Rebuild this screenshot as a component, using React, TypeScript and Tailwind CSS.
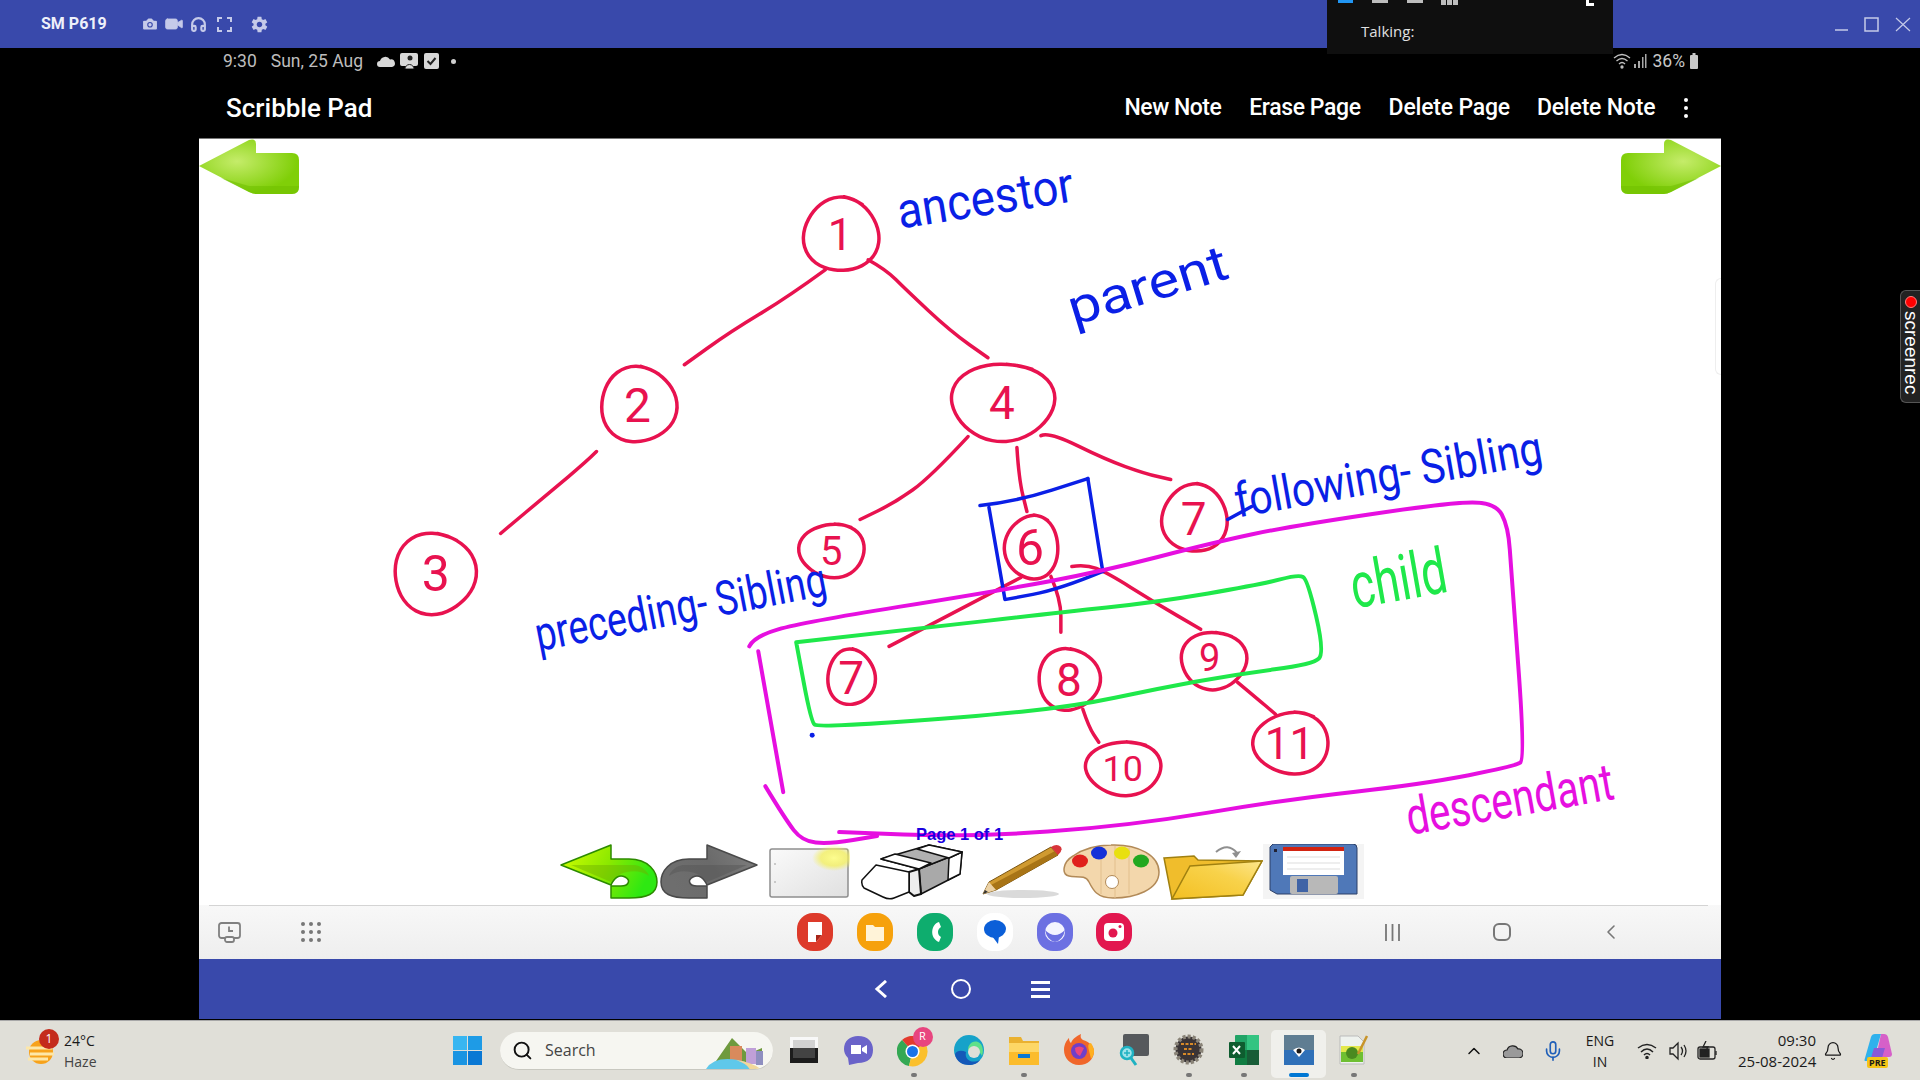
import { ChevronLeft, ChevronUp, Mic, Search, Bell, Video, Camera, Headphones } from 'lucide-react'
import { IoMdSettings } from 'react-icons/io'

type Pt = [number, number]

// ink strokes are stored as page coordinates, the sketch svg uses the same numbers in its viewBox
function smooth(pts: Pt[]) {
  let d = `M${pts[0][0]} ${pts[0][1]}`
  for (let i = 1; i < pts.length - 1; i++) {
    const mx = (pts[i][0] + pts[i + 1][0]) / 2
    const my = (pts[i][1] + pts[i + 1][1]) / 2
    d += `Q${pts[i][0]} ${pts[i][1]} ${mx} ${my}`
  }
  const last = pts[pts.length - 1]
  return d + `L${last[0]} ${last[1]}`
}

function loop(cx: number, cy: number, rx: number, ry: number, phase: number) {
  const pts: Pt[] = []
  for (let i = 0; i <= 26; i++) {
    const t = -1.5 + (i / 24) * Math.PI * 2
    const w = 1 + 0.035 * Math.sin(t * 3 + phase)
    pts.push([+(cx + Math.cos(t) * rx * w).toFixed(1), +(cy + Math.sin(t) * ry * w).toFixed(1)])
  }
  return smooth(pts)
}

const nodes = [
  { n: '1', x: 841, y: 235, rx: 38, ry: 37, tx: 840, ty: 250, size: 44 },
  { n: '2', x: 638, y: 405, rx: 38, ry: 38, tx: 637, ty: 422, size: 48 },
  { n: '3', x: 434, y: 574, rx: 41, ry: 41, tx: 435, ty: 592, size: 50 },
  { n: '4', x: 1003, y: 402, rx: 52, ry: 39, tx: 1002, ty: 419, size: 46 },
  { n: '5', x: 832, y: 551, rx: 33, ry: 27, tx: 831, ty: 566, size: 40 },
  { n: '6', x: 1032, y: 548, rx: 27, ry: 32, tx: 1030, ty: 566, size: 50 },
  { n: '7', x: 1195, y: 519, rx: 33, ry: 34, tx: 1194, ty: 536, size: 46 },
  { n: '7', x: 851, y: 678, rx: 24, ry: 28, tx: 851, ty: 695, size: 46 },
  { n: '8', x: 1069, y: 680, rx: 31, ry: 31, tx: 1069, ty: 697, size: 46 },
  { n: '9', x: 1214, y: 661, rx: 33, ry: 29, tx: 1210, ty: 672, size: 38 },
  { n: '10', x: 1124, y: 769, rx: 38, ry: 27, tx: 1123, ty: 782, size: 36 },
  { n: '11', x: 1292, y: 744, rx: 38, ry: 31, tx: 1290, ty: 760, size: 44 },
]

const pinkLines: Pt[][] = [
  [[825, 270], [788, 297], [730, 332], [684, 365]],
  [[868, 260], [886, 270], [906, 290], [951, 332], [988, 358]],
  [[596, 452], [586, 462], [550, 492], [500, 534]],
  [[968, 437], [930, 478], [895, 503], [860, 520]],
  [[1017, 448], [1019, 480], [1027, 512]],
  [[1041, 436], [1049, 432], [1106, 460], [1145, 474], [1171, 480]],
  [[1021, 578], [960, 610], [889, 647]],
  [[1051, 577], [1061, 600], [1061, 633]],
  [[1072, 567], [1086, 565], [1107, 573], [1155, 603], [1201, 630]],
  [[1083, 710], [1089, 728], [1099, 743]],
  [[1238, 683], [1256, 698], [1276, 715]],
]

const magentaLines: Pt[][] = [
  [[749, 647], [754, 637], [802, 623], [995, 592], [1102, 572], [1214, 543], [1289, 527], [1450, 503], [1496, 503], [1509, 527], [1512, 573], [1526, 760], [1516, 767], [1423, 785], [1289, 800], [1128, 827], [968, 838], [839, 833]],
  [[758, 652], [770, 720], [783, 793]],
  [[765, 787], [785, 820], [802, 842], [829, 845], [877, 837]],
]

const greenLine: Pt[] = [[796, 643], [914, 630], [1059, 613], [1155, 603], [1262, 585], [1299, 575], [1308, 580], [1325, 653], [1314, 665], [1236, 675], [1155, 690], [1075, 707], [968, 718], [818, 728], [811, 723], [796, 643]]

const blueLines: Pt[][] = [
  [[980, 506], [1016, 502], [1088, 479]],
  [[1088, 479], [1096, 530], [1103, 572]],
  [[1103, 572], [1060, 590], [1006, 600]],
  [[989, 508], [1005, 600]],
]

// labels on the page, size picked so the glyphs fill the same run as the writing
const labels = [
  { t: 'ancestor', x: 900, y: 229, w: 178, size: 50, a: -9, c: '#0a1fe6' },
  { t: 'parent', x: 1074, y: 326, w: 165, size: 50, a: -17, c: '#0a1fe6' },
  { t: 'following- Sibling', x: 1238, y: 518, w: 312, size: 48, a: -10, c: '#0a1fe6' },
  { t: 'preceding- Sibling', x: 538, y: 652, w: 296, size: 48, a: -11, c: '#0a1fe6' },
  { t: 'child', x: 1355, y: 609, w: 97, size: 64, a: -10, c: '#1fe84a' },
  { t: 'descendant', x: 1410, y: 836, w: 210, size: 52, a: -10, c: '#e60fe0' },
]

function Sketch() {
  return (
    <svg viewBox="199 139 1522 767" className="absolute inset-0 w-full h-full" fill="none" strokeLinecap="round" strokeLinejoin="round">
      <g stroke="#e8124f" strokeWidth="3.5">
        {pinkLines.map((l, i) => <path key={i} d={smooth(l)} />)}
        {nodes.map((c, i) => <path key={i} d={loop(c.x, c.y, c.rx, c.ry, i)} />)}
      </g>
      <g className="font-['Roboto',sans-serif] font-normal">
        {nodes.map((c, i) => (
          <text key={i} x={c.tx} y={c.ty} fontSize={c.size} fill="#e8124f" textAnchor="middle">{c.n}</text>
        ))}
        {labels.map((l) => (
          <text
            key={l.t}
            x={l.x}
            y={l.y}
            fontSize={l.size}
            fill={l.c}
            textLength={l.w}
            lengthAdjust="spacingAndGlyphs"
            transform={`rotate(${l.a} ${l.x} ${l.y})`}
          >
            {l.t}
          </text>
        ))}
      </g>
      <g stroke="#0a1fe6" strokeWidth="3.5">
        {blueLines.map((l, i) => <path key={i} d={smooth(l)} />)}
        <path d="M1228 520 L1252 507" />
      </g>
      <circle cx="812" cy="736" r="2.5" fill="#0a1fe6" />
      <path d={smooth(greenLine)} stroke="#1fe84a" strokeWidth="4" />
      <g stroke="#e60fe0" strokeWidth="4">
        {magentaLines.map((l, i) => <path key={i} d={smooth(l)} />)}
      </g>
    </svg>
  )
}

function PageArrow({ flip }: { flip?: boolean }) {
  const id = flip ? 'pa2' : 'pa1'
  return (
    <svg width="100" height="56" viewBox="0 0 100 56" className={flip ? 'absolute top-0 right-0 -scale-x-100' : 'absolute top-0 left-0'}>
      <defs>
        <radialGradient id={id} cx="0.38" cy="0.4" r="0.6">
          <stop offset="0" stopColor="#c5ec6a" />
          <stop offset="1" stopColor="#80cf08" />
        </radialGradient>
      </defs>
      <path d="M0 27 L50 1 Q57 -1 57 5 V14 H93 Q100 14 100 21 V48 Q100 55 93 55 H58 L57 55 Q54 55 50 53 Z" fill={`url(#${id})`} />
      <path d="M22 39 L50 53 Q54 55 58 55 H93 Q100 55 100 48 V47 H50 Z" fill="#6fc000" opacity="0.55" />
    </svg>
  )
}

function UndoArrow({ gray }: { gray?: boolean }) {
  const id = gray ? 'ua2' : 'ua1'
  return (
    <svg width="100" height="55" viewBox="0 0 100 55" className={gray ? '-scale-x-100' : ''}>
      <defs>
        <linearGradient id={id} x1="0" x2="1" y1="0" y2="0.3">
          <stop offset="0" stopColor={gray ? '#808080' : '#d4ff00'} />
          <stop offset="0.55" stopColor={gray ? '#6a6a6a' : '#8be800'} />
          <stop offset="1" stopColor={gray ? '#6e6e6e' : '#2ee812'} />
        </linearGradient>
      </defs>
      <path d="M2 21 L52 1 V15 H70 C90 15 98 28 98 38 C98 50 88 54 70 54 H52 V42 H62 C70 42 72 36 66 33 C60 30 55 34 52 41 Z" fill={`url(#${id})`} stroke={gray ? '#4a4a4a' : '#2c8a00'} strokeWidth="1.5" strokeLinejoin="round" />
      <path d="M12 21 L52 21 H76 C82 22 88 26 90 32 C80 24 60 26 52 38 Z" fill={gray ? '#555' : '#6fb000'} opacity="0.45" />
    </svg>
  )
}

function NotePage() {
  return (
    <svg width="82" height="55" viewBox="0 0 82 55">
      <defs>
        <linearGradient id="np" x1="0" x2="1" y1="0" y2="1">
          <stop offset="0" stopColor="#fafafa" />
          <stop offset="1" stopColor="#e0e0e0" />
        </linearGradient>
        <radialGradient id="gl">
          <stop offset="0" stopColor="#fdfd90" />
          <stop offset="0.6" stopColor="#f4f05a" stopOpacity="0.75" />
          <stop offset="1" stopColor="#f4f05a" stopOpacity="0" />
        </radialGradient>
      </defs>
      <rect x="2" y="5" width="78" height="48" rx="2" fill="url(#np)" stroke="#8e8e8e" strokeWidth="1.5" />
      <ellipse cx="66" cy="14" rx="22" ry="13" fill="url(#gl)" />
      <circle cx="7" cy="20" r="1" fill="#bbb" />
      <circle cx="7" cy="38" r="1" fill="#bbb" />
    </svg>
  )
}

function Eraser() {
  return (
    <svg width="102" height="56" viewBox="0 0 102 56" strokeLinejoin="round" stroke="#111" strokeWidth="1.5">
      <path d="M58 25 L101 8 L99 30 L60 50 Z" fill="#a9a9a9" />
      <path d="M88 14 L101 8 L99 30 L87 36 Z" fill="#fff" />
      <path d="M20 15 L68 1 L101 8 L58 25 Z" fill="#b0b0b0" />
      <path d="M68 1 L101 8 L88 14 L56 5 Z" fill="#fff" />
      <path d="M20 15 L34 10 L70 19 L58 25 Z" fill="#fff" />
      <path d="M48 28 L58 25 L60 50 L53 52 L48 48 Z" fill="#ededed" strokeWidth="2" />
      <path d="M1 36 L15 21 L48 28 L48 48 L33 54 Q28 56 22 53 L3 44 Q0 41 1 36 Z" fill="#fff" />
    </svg>
  )
}

function Pencil() {
  return (
    <svg width="82" height="55" viewBox="0 0 82 55">
      <ellipse cx="42" cy="50" rx="36" ry="4" fill="#bbb" opacity="0.55" />
      <path d="M2 50 L8 38 L70 3 L77 11 L15 46 Z" fill="#d09a30" stroke="#7a5410" strokeWidth="1" />
      <path d="M10 41 L74 7 L77 11 L15 46 Z" fill="#a87416" />
      <path d="M2 50 L8 38 L15 46 Z" fill="#ecd2a6" />
      <path d="M2 50 L4 46 L7 48 Z" fill="#333" />
      <path d="M70 3 Q76 -1 80 3 Q82 7 77 11 Z" fill="#d8343a" />
    </svg>
  )
}

function Palette() {
  return (
    <svg width="97" height="55" viewBox="0 0 97 55">
      <path d="M48 1 C76 0 96 12 96 28 C96 46 72 54 50 54 C34 54 30 46 26 38 C22 30 12 34 6 32 C-2 30 0 18 10 12 C20 5 34 1 48 1 Z" fill="#f3d7ac" stroke="#b28a58" strokeWidth="1.5" />
      <g stroke="#e2bf8c" strokeWidth="1">
        <path d="M38 3 V50" />
        <path d="M52 2 V54" />
        <path d="M66 4 V50" />
      </g>
      <circle cx="49" cy="38" r="6.5" fill="#fff" stroke="#b28a58" />
      <ellipse cx="17" cy="17" rx="8" ry="6.5" fill="#e0201c" />
      <ellipse cx="36" cy="9" rx="8" ry="6.5" fill="#1530d8" />
      <ellipse cx="59" cy="9" rx="8" ry="6.5" fill="#e8e010" />
      <ellipse cx="78" cy="17" rx="8" ry="6.5" fill="#22a820" />
    </svg>
  )
}

function Folder() {
  return (
    <svg width="101" height="56" viewBox="0 0 101 56">
      <defs>
        <linearGradient id="fd" x1="0" x2="1" y1="1" y2="0">
          <stop offset="0" stopColor="#f3bf22" />
          <stop offset="0.6" stopColor="#f8d24a" />
          <stop offset="1" stopColor="#fde68c" />
        </linearGradient>
      </defs>
      <path d="M2 14 L32 12 L36 16 L100 17 L81 51 L10 55 Z" fill="#f0bd2c" stroke="#a08010" strokeWidth="1.5" />
      <path d="M28 22 L100 17 L81 51 L10 55 Z" fill="url(#fd)" stroke="#a08010" strokeWidth="1.5" />
      <path d="M54 8 Q66 -2 75 9" fill="none" stroke="#8f8f8f" strokeWidth="2" />
      <path d="M70 9 L79 7 L74 14 Z" fill="#8f8f8f" />
    </svg>
  )
}

function Floppy() {
  return (
    <svg width="101" height="55" viewBox="0 0 101 55" className="bg-[#f4f4f4]">
      <path d="M10 0 H90 Q94 0 94 4 V50 H14 L7 46 V3 Z" fill="#4f78b8" stroke="#2c3f66" strokeWidth="1" />
      <rect x="20" y="3" width="61" height="28" fill="#fff" />
      <rect x="20" y="3" width="61" height="4" fill="#d22412" />
      <path d="M24 13 H77 M24 19 H77 M24 25 H77" stroke="#ddd" />
      <rect x="27" y="32" width="48" height="18" rx="2" fill="#b8b8b8" />
      <rect x="34" y="35" width="11" height="13" fill="#3f63a6" />
      <rect x="11" y="5" width="3" height="3" fill="#223" />
    </svg>
  )
}

function AppIcon({ bg, children }: { bg: string; children: React.ReactNode }) {
  return (
    <div className={`w-[36px] h-[38px] rounded-[16px] flex items-center justify-center ${bg}`}>
      {children}
    </div>
  )
}

function TopBar() {
  return (
    <div className="h-[48px] bg-[#3949ab] flex items-center pl-[41px] text-[#c5cae9] shrink-0">
      <span className="text-[16px] font-bold text-[#eef0fa] font-['Roboto',sans-serif] w-[100px]">SM P619</span>
      <Camera size={18} fill="currentColor" stroke="#3949ab" strokeWidth={1.5} />
      <Video size={20} fill="currentColor" strokeWidth={1} className="ml-[5px]" />
      <Headphones size={17} strokeWidth={3} className="ml-[6px]" />
      <svg width="15" height="15" viewBox="0 0 15 15" fill="none" stroke="currentColor" strokeWidth="2" className="ml-[10px]">
        <path d="M1 5V1H5M10 1H14V5M14 10V14H10M5 14H1V10" />
      </svg>
      <IoMdSettings size={19} className="ml-[18px]" />
      <div className="ml-auto flex items-center gap-[16px] pr-[9px]">
        <svg width="13" height="15" viewBox="0 0 13 15" stroke="currentColor" strokeWidth="1.5"><path d="M0 13H13" /></svg>
        <svg width="15" height="15" viewBox="0 0 15 15" fill="none" stroke="currentColor" strokeWidth="1.5"><rect x="1" y="1" width="13" height="13" /></svg>
        <svg width="16" height="15" viewBox="0 0 16 15" stroke="currentColor" strokeWidth="1.2"><path d="M1 1L15 14M15 1L1 14" /></svg>
      </div>
    </div>
  )
}

function StatusBar() {
  return (
    <div className="h-[44px] flex items-center pb-[18px] pl-[24px] pr-[23px] text-[17.5px] text-[#bdbdbd] font-['Roboto',sans-serif]">
      <span>9:30</span>
      <span className="ml-[14px]">Sun, 25 Aug</span>
      <svg width="18" height="11" viewBox="0 0 18 11" fill="#d8d8d8" className="ml-[14px]"><path d="M3 11A3 3 0 0 1 3 5 5.5 5.5 0 0 1 13 3.500 3.800 3.800 0 0 1 15 11Z" /></svg>
      <svg width="18" height="16" viewBox="0 0 18 16" fill="#d8d8d8" className="ml-[5px]"><rect width="18" height="13" rx="2" /><circle cx="10" cy="5" r="2.500" fill="#222" /><path d="M5 16a4 4 0 0 1 9 0Z" fill="#d8d8d8" stroke="#222" /></svg>
      <svg width="15" height="16" viewBox="0 0 15 16" className="ml-[6px]"><rect width="15" height="16" rx="2" fill="#d8d8d8" /><path d="M3.500 8L6.500 11L11.500 5" stroke="#222" strokeWidth="2" fill="none" /></svg>
      <span className="w-[5px] h-[5px] rounded-full bg-[#d0d0d0] ml-[12px]" />
      <div className="ml-auto flex items-center">
        <svg width="18" height="16" viewBox="0 0 18 16" fill="none" stroke="#c0c0c0" strokeWidth="1.300"><path d="M1 5Q9 -2 17 5M3.500 8Q9 3 14.500 8M6 11Q9 8 12 11" /><circle cx="9" cy="14" r="1" fill="#c0c0c0" /></svg>
        <svg width="13" height="14" viewBox="0 0 13 14" fill="#a8a8a8" className="ml-[3px]"><rect x="0" y="10" width="2" height="4" /><rect x="4" y="7" width="2" height="7" /><rect x="8" y="3" width="1.500" height="11" /><rect x="11" y="0" width="1.500" height="14" /></svg>
        <span className="ml-[6px] text-[#c8c8c8]">36%</span>
        <svg width="8" height="16" viewBox="0 0 8 16" fill="#c8c8c8" className="ml-[5px]"><rect x="2.500" width="3" height="2" /><rect y="2" width="8" height="14" rx="1" /></svg>
      </div>
    </div>
  )
}

function AppBar() {
  return (
    <div className="h-[47px] flex items-center pb-[14px] pl-[27px] font-['Roboto',sans-serif] font-medium text-white border-b border-[#777]">
      <span className="text-[26px]">Scribble Pad</span>
      <span className="text-[23px] ml-[752px] tracking-[-0.5px]">New Note</span>
      <span className="text-[23px] ml-[28px] tracking-[-0.4px]">Erase Page</span>
      <span className="text-[23px] ml-[28px] tracking-[-0.2px]">Delete Page</span>
      <span className="text-[23px] ml-[27px] tracking-[-0.2px]">Delete Note</span>
      <div className="flex flex-col gap-[4px] ml-[29px]">
        <span className="w-[4px] h-[4px] rounded-full bg-white" />
        <span className="w-[4px] h-[4px] rounded-full bg-white" />
        <span className="w-[4px] h-[4px] rounded-full bg-white" />
      </div>
    </div>
  )
}

function DrawArea() {
  return (
    <div className="h-[766px] relative bg-white">
      <Sketch />
      <PageArrow />
      <PageArrow flip />
      <div className="absolute top-[139px] right-0 w-[6px] h-[97px] rounded-l-[6px] border border-r-0 border-[#eee]" />
      <span className="absolute left-[717px] top-[683px] text-[16.5px] font-bold text-[#1a00e0] font-['Liberation_Sans',sans-serif]">Page 1 of 1</span>
      <div className="absolute left-[360px] top-[705px] flex items-start">
        <UndoArrow />
        <div className="ml-[0px]"><UndoArrow gray /></div>
        <div className="ml-[9px]"><NotePage /></div>
        <div className="ml-[11px]"><Eraser /></div>
        <div className="ml-[18px]"><Pencil /></div>
        <Palette />
        <div className="ml-[2px]"><Folder /></div>
        <Floppy />
      </div>
    </div>
  )
}

function NavBar() {
  return (
    <div className="h-[54px] relative flex items-center pl-[19px] bg-gradient-to-b from-[#f8f8f8] to-[#eeeeee]">
      <div className="absolute top-0 left-[10px] right-[13px] h-px bg-[#d4d4d4]" />
      <svg width="23" height="21" viewBox="0 0 23 21" fill="none" stroke="#808080" strokeWidth="1.800">
        <rect x="1" y="1" width="21" height="15" rx="2.500" />
        <path d="M11 4.500V9H15" />
        <rect x="7" y="15" width="9" height="5" rx="2" fill="#f5f5f5" />
      </svg>
      <div className="grid grid-cols-3 gap-x-[4px] gap-y-[4px] ml-[60px]">
        {Array.from({ length: 9 }).map((_, i) => (
          <span key={i} className="w-[4px] h-[4px] rounded-full bg-[#777]" />
        ))}
      </div>
      <div className="flex items-center gap-[24px] ml-[476px]">
        <AppIcon bg="bg-[#dd3a2a]">
          <svg width="20" height="22" viewBox="0 0 20 22"><path d="M3 1H17V14L11 21H3Z" fill="#fff" /><path d="M11 21V14H17Z" fill="#a82418" /></svg>
        </AppIcon>
        <AppIcon bg="bg-[#f6a10c]">
          <svg width="20" height="20" viewBox="0 0 20 20"><path d="M1 3H8L10 5H19V19H1Z" fill="#fff3d8" /></svg>
        </AppIcon>
        <AppIcon bg="bg-[#0ead6e]">
          <svg width="20" height="24" viewBox="0 0 20 24"><path d="M14 2C6 4 4 18 14 22L16 17C12 15 12 9 16 7Z" fill="#fff" /></svg>
        </AppIcon>
        <AppIcon bg="bg-white">
          <svg width="24" height="28" viewBox="0 0 24 28"><ellipse cx="12" cy="11" rx="11" ry="9" fill="#0b5fd8" /><path d="M9 18L15 26L16 18Z" fill="#0b5fd8" /></svg>
        </AppIcon>
        <AppIcon bg="bg-[#6c70e2]">
          <svg width="28" height="28" viewBox="0 0 28 28" fill="none"><circle cx="14" cy="14" r="10" fill="#f4f4ff" /><path d="M4 12Q14 22 24 12Q22 22 14 24Q6 22 4 12Z" fill="#6c70e2" /></svg>
        </AppIcon>
        <div className="ml-[-1px]">
          <AppIcon bg="bg-[#e2174f]">
            <svg width="22" height="20" viewBox="0 0 22 20"><rect x="1" y="1" width="20" height="18" rx="4" fill="#fff" /><circle cx="10" cy="11" r="4.500" fill="#e2174f" /><circle cx="17" cy="4.500" r="1.500" fill="#e2174f" /></svg>
          </AppIcon>
        </div>
      </div>
      <svg width="17" height="17" viewBox="0 0 17 17" stroke="#777" strokeWidth="1.800" className="ml-[252px]"><path d="M2 0V17M8.500 0V17M15 0V17" /></svg>
      <div className="w-[18px] h-[18px] rounded-[6px] border-[2px] border-[#777] ml-[92px]" />
      <ChevronLeft size={24} color="#777" strokeWidth={1.600} className="ml-[88px]" />
    </div>
  )
}

function BlueNav() {
  return (
    <div className="h-[60px] bg-[#3949ab] flex items-center pl-[675px]">
      <svg width="14" height="18" viewBox="0 0 14 18" fill="none" stroke="#fff" strokeWidth="3"><path d="M12 1L3 9L12 17" /></svg>
      <div className="w-[20px] h-[20px] rounded-full border-[2px] border-white ml-[63px]" />
      <div className="flex flex-col gap-[4px] ml-[60px]">
        <span className="w-[19px] h-[3px] bg-white" />
        <span className="w-[19px] h-[3px] bg-white" />
        <span className="w-[19px] h-[3px] bg-white" />
      </div>
    </div>
  )
}

function TaskIcon({ children, dot, active }: { children: React.ReactNode; dot?: boolean; active?: boolean }) {
  return (
    <div className={`w-[55px] h-[48px] mt-[6px] relative flex items-center justify-center rounded-[5px] ${active ? 'bg-[#f0f0ec]' : ''}`}>
      <div className="mt-[-8px] flex">{children}</div>
      {dot && <span className="absolute bottom-[1px] w-[6px] h-[4px] rounded-[2px] bg-[#777]" />}
      {active && <span className="absolute bottom-[1px] w-[20px] h-[4px] rounded-[2px] bg-[#0078d4]" />}
    </div>
  )
}

function Taskbar() {
  return (
    <div className="h-[60px] shrink-0 flex items-center bg-[#e0dfd8] border-t border-[#a8a8a8] font-['Open_Sans',sans-serif] text-[#1a1a1a] relative">
      {/* weather */}
      <div className="w-[453px] pl-[26px] flex items-center">
        <div className="relative w-[38px] h-[30px]">
          <svg width="28" height="28" viewBox="0 0 28 28" className="absolute top-[2px] left-0">
            <circle cx="15" cy="14" r="12" fill="#f7a21b" />
            <path d="M0 10H26M4 16H28M2 21H22" stroke="#fde7a8" strokeWidth="3" />
          </svg>
          <span className="absolute top-[-7px] left-[13px] w-[20px] h-[20px] rounded-full bg-[#c42b1c] text-white text-[12px] flex items-center justify-center">1</span>
        </div>
        <div className="leading-[21px] text-[14px]">
          <div>24°C</div>
          <div className="text-[#444]">Haze</div>
        </div>
      </div>
      {/* start */}
      <svg width="29" height="29" viewBox="0 0 29 29">
        <rect width="14" height="14" fill="#38b6f1" />
        <rect x="15" width="14" height="14" fill="#1e9be6" />
        <rect y="15" width="14" height="14" fill="#1a94e2" />
        <rect x="15" y="15" width="14" height="14" fill="#0a78d4" />
      </svg>
      <div className="w-[273px] h-[38px] ml-[18px] rounded-full bg-[#f6f6f1] border-b border-[#c8c8c0] flex items-center pl-[12px] relative overflow-hidden">
        <Search size={21} color="#111" strokeWidth={2.200} />
        <span className="ml-[12px] text-[16px] text-[#444]">Search</span>
        <svg width="62" height="34" viewBox="0 0 62 34" className="absolute right-[5px] top-[4px]">
          <path d="M26 2L42 18L56 12V28H8Z" fill="#6f9a3e" />
          <rect x="24" y="10" width="12" height="18" fill="#d98a5c" />
          <rect x="40" y="12" width="10" height="16" fill="#c0a0d8" />
          <rect x="50" y="15" width="7" height="14" fill="#8f8fc0" />
          <path d="M0 33Q8 20 32 24Q46 27 52 34Z" fill="#5fc8ea" />
          <path d="M30 24Q46 26 56 34H44Q42 28 30 24Z" fill="#f2d79a" />
        </svg>
      </div>
      {/* pinned apps */}
      <div className="flex items-center ml-[3px] h-full">
        <TaskIcon>
          <svg width="28" height="26" viewBox="0 0 28 26"><rect width="28" height="12" fill="#f8f8f8" /><rect y="11" width="28" height="15" fill="#1c1c1c" /><rect x="3" y="3" width="22" height="18" fill="#8c8c8c" opacity="0.35" /></svg>
        </TaskIcon>
        <TaskIcon>
          <svg width="29" height="30" viewBox="0 0 29 30"><path d="M14 1C24 1 29 7 29 15C29 23 24 28 14 28L5 30L4 23C1 20 0 17 0 14C0 6 6 1 14 1Z" fill="#6a63c9" /><path d="M7 10H17V19H7ZM18 13L23 10V19L18 16Z" fill="#fff" /></svg>
        </TaskIcon>
        <TaskIcon dot>
          <div className="relative w-[34px] h-[32px]">
            <svg width="31" height="31" viewBox="0 0 31 31" className="absolute left-0 top-[2px]">
              <path d="M15.500 15.500L5 4A15 15 0 0 1 28 7Z" fill="#e33b2e" />
              <path d="M15.500 15.500L5 4A15 15 0 0 0 12 30Z" fill="#34a853" />
              <path d="M15.500 15.500L28 7A15 15 0 0 1 12 30Z" fill="#fbc02d" />
              <circle cx="15.500" cy="15.500" r="7" fill="#fff" />
              <circle cx="15.500" cy="15.500" r="5.500" fill="#1a73e8" />
            </svg>
            <span className="absolute right-[-2px] top-[-7px] w-[20px] h-[20px] rounded-full bg-[#e8457f] text-white text-[11px] flex items-center justify-center">R</span>
          </div>
        </TaskIcon>
        <TaskIcon>
          <svg width="30" height="30" viewBox="0 0 30 30"><circle cx="15" cy="15" r="15" fill="#16a2c9" /><path d="M1 19C2 27 9 30 15 30C20 30 24 28 26 25C18 29 10 25 12 17C8 15 3 15 1 19Z" fill="#1458b8" /><path d="M14 15C20 14 26 16 28 21C30 16 29 9 24 7C18 5 14 10 14 15Z" fill="#5fe08a" /><circle cx="20" cy="17" r="6" fill="#e0dfd8" /></svg>
        </TaskIcon>
        <TaskIcon dot>
          <svg width="30" height="30" viewBox="0 0 30 30"><path d="M0 2H12L14 6H30V30H0Z" fill="#eab130" /><rect y="8" width="30" height="22" fill="#fdd766" /><rect y="17" width="30" height="13" fill="#fbbc2c" /><rect x="9" y="19" width="12" height="4" fill="#0a78d4" /></svg>
        </TaskIcon>
        <TaskIcon>
          <svg width="30" height="31" viewBox="0 0 30 31"><path d="M15 31C6 31 0 24 0 16C0 10 3 6 5 4C5 7 6 8 7 9C9 4 13 2 17 0C16 3 17 5 19 6C25 8 30 12 30 17C30 25 24 31 15 31Z" fill="#f0662a" /><path d="M27 9C29 12 30 15 30 17C30 20 29 23 27 25C25 15 22 10 27 9Z" fill="#ffb020" /><circle cx="15" cy="17" r="8" fill="#6f3fc8" /><path d="M11 14Q15 11 20 14L16 22Q11 20 11 14Z" fill="#e8457f" /></svg>
        </TaskIcon>
        <TaskIcon>
          <svg width="30" height="32" viewBox="0 0 30 32"><rect x="4" width="26" height="22" rx="2" fill="#56595c" /><circle cx="8" cy="19" r="6" fill="#9fe3ea" stroke="#1fb2c2" strokeWidth="2.500" /><path d="M8 16V22M5 19H11" stroke="#1fb2c2" strokeWidth="1.500" /><path d="M12 24L17 31" stroke="#1fb2c2" strokeWidth="3" /></svg>
        </TaskIcon>
        <TaskIcon dot>
          <svg width="31" height="31" viewBox="0 0 31 31"><circle cx="15.500" cy="15.500" r="13" fill="#3a3436" stroke="#8a8478" strokeWidth="4" strokeDasharray="3 2" /><path d="M8 10H23M11 15H20M10 20H21" stroke="#d88a28" strokeWidth="2" strokeDasharray="3 1.500" /></svg>
        </TaskIcon>
        <TaskIcon dot>
          <svg width="30" height="30" viewBox="0 0 30 30"><rect x="6" width="24" height="30" rx="1" fill="#21a366" /><rect x="18" width="12" height="15" fill="#33c481" /><rect x="6" y="15" width="12" height="15" fill="#107c41" /><rect x="18" y="15" width="12" height="15" fill="#185c37" /><rect y="7" width="16" height="16" rx="1" fill="#0e5c2f" /><path d="M4 11L11 19M11 11L4 19" stroke="#fff" strokeWidth="2" /></svg>
        </TaskIcon>
        <TaskIcon active>
          <svg width="30" height="30" viewBox="0 0 30 30"><rect width="30" height="16" fill="#5f7d92" /><rect y="15" width="30" height="15" fill="#2f70b8" /><path d="M9 15Q15 10 21 15L15 22Z" fill="#fff" /><circle cx="15" cy="16" r="2.500" fill="#1a1a1a" /></svg>
        </TaskIcon>
        <TaskIcon dot>
          <svg width="30" height="32" viewBox="0 0 30 32"><path d="M1 2H19L25 8V30H1Z" fill="#eef2ee" stroke="#bbb" /><rect x="2" y="12" width="22" height="16" fill="#6fbf32" /><rect x="2" y="12" width="22" height="6" fill="#e3e84a" /><circle cx="13" cy="19" r="6" fill="#4a8a20" /><path d="M19 20L28 2" stroke="#c8942a" strokeWidth="2.500" /></svg>
        </TaskIcon>
      </div>
      {/* tray */}
      <ChevronUp size={20} strokeWidth={1.800} className="ml-[83px] text-[#111]" />
      <svg width="20" height="14" viewBox="0 0 20 14" className="ml-[19px]"><path d="M4 14A4 4 0 0 1 4 6 6 6 0 0 1 15 5 4.500 4.500 0 0 1 16 14Z" fill="#9a9a9a" stroke="#222" strokeWidth="1.200" /></svg>
      <Mic size={22} color="#1f5fb8" strokeWidth={1.800} className="ml-[19px]" />
      <div className="w-[30px] ml-[21px] text-center text-[14px] leading-[21px]">
        <div>ENG</div>
        <div>IN</div>
      </div>
      <svg width="20" height="16" viewBox="0 0 20 16" fill="none" stroke="#222" strokeWidth="1.500" className="ml-[22px]"><path d="M1 5Q10 -2 19 5M4 9Q10 3 16 9M7 12Q10 9 13 12" /><circle cx="10" cy="14.500" r="1" fill="#222" /></svg>
      <svg width="20" height="20" viewBox="0 0 20 20" fill="none" stroke="#222" strokeWidth="1.300" className="ml-[12px]"><path d="M1 7H4L9 2V18L4 13H1Z" /><path d="M12 6Q15 10 12 14M15 4Q19 10 15 16" /></svg>
      <svg width="22" height="20" viewBox="0 0 22 20" fill="none" stroke="#222" strokeWidth="1.300" className="ml-[8px]"><rect x="1" y="6" width="17" height="12" rx="2" /><rect x="3" y="8" width="9" height="8" fill="#222" /><path d="M19 10V14M9 0L6 6H11L8 11" /></svg>
      <div className="w-[78px] ml-[19px] text-right text-[15px] leading-[21px] whitespace-nowrap">
        <div>09:30</div>
        <div>25-08-2024</div>
      </div>
      <Bell size={20} strokeWidth={1.500} className="ml-[7px]" />
      <div className="relative ml-[18px] w-[31px] h-[34px]">
        <svg width="31" height="28" viewBox="0 0 31 28"><path d="M4 24L10 3Q11 0 14 0H20L13 24Q12 27 9 27H4Q3 27 4 24Z" fill="#2fb1ec" /><path d="M20 0H23Q26 0 27 3L31 20Q31 23 28 23H15Z" fill="#d660c8" /><path d="M13 14H24L20 27H9Z" fill="#8a5ad8" /></svg>
        <span className="absolute bottom-0 left-[6px] bg-[#f5c518] text-[#1a1a1a] text-[9px] font-bold leading-[11px] px-[2px] rounded-[2px]">PRE</span>
      </div>
    </div>
  )
}

export default function App() {
  return (
    <div className="w-[1920px] h-[1080px] relative overflow-hidden bg-black flex flex-col">
      <TopBar />
      <div className="flex-1 min-h-0 w-[1522px] ml-[199px]">
        <StatusBar />
        <AppBar />
        <DrawArea />
        <NavBar />
        <BlueNav />
      </div>
      <Taskbar />

      {/* floating talking panel sits over the title bar */}
      <div className="absolute top-0 left-[1327px] w-[286px] h-[54px] bg-[#0f0f0f]">
        <div className="absolute top-0 left-[11px] w-[15px] h-[3px] bg-[#2196f3]" />
        <div className="absolute top-0 left-[45px] w-[16px] h-[3px] bg-[#bdbdbd]" />
        <div className="absolute top-0 left-[80px] w-[16px] h-[3px] bg-[#bdbdbd]" />
        <div className="absolute top-0 left-[114px] flex gap-[1px]">
          <span className="w-[5px] h-[5px] bg-[#bdbdbd]" />
          <span className="w-[5px] h-[5px] bg-[#bdbdbd]" />
          <span className="w-[5px] h-[5px] bg-[#bdbdbd]" />
        </div>
        <div className="absolute top-0 left-[259px] w-[8px] h-[6px] border-l-[3px] border-b-[3px] border-white" />
        <span className="absolute left-[34px] top-[20px] text-[15px] text-[#e0e0e0] font-['Open_Sans',sans-serif]">Talking:</span>
      </div>

      {/* screen recorder tab */}
      <div className="absolute top-[290px] left-[1900px] w-[20px] h-[113px] rounded-l-[6px] bg-[#222] border border-r-0 border-[#555] flex flex-col items-center pt-[5px]">
        <span className="w-[12px] h-[12px] rounded-full bg-[#ff0000] border border-[#ff8080] shrink-0" />
        <span className="mt-[3px] text-[19px] leading-[18px] text-white [writing-mode:vertical-rl] font-['Liberation_Sans',sans-serif]">screenrec</span>
      </div>
    </div>
  )
}
